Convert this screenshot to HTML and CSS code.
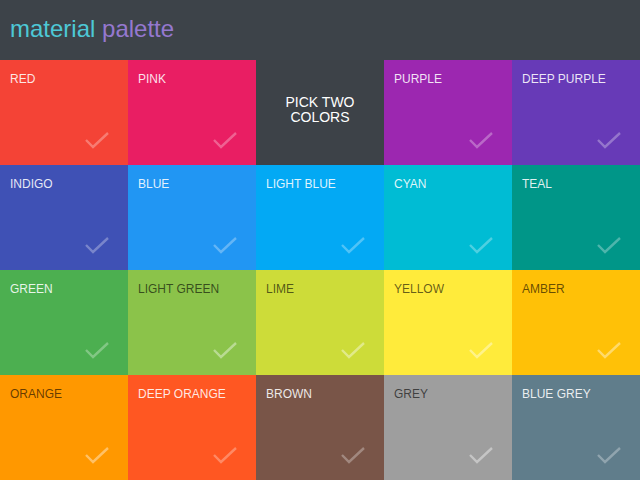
FILE: index.html
```html
<!DOCTYPE html>
<html>
<head>
<meta charset="utf-8">
<link rel="stylesheet" href="styles.css">
</head>
<body>
<header class="header">
  <h1 class="title"><span class="t-material">material</span> <span class="t-palette">palette</span></h1>
</header>
<main class="grid">
  <div class="cell red light-text"><span class="label">RED</span><svg class="check" viewBox="0 0 26 20"><path d="M2 9 L9 16 L24 2"/></svg></div>
  <div class="cell pink light-text"><span class="label">PINK</span><svg class="check" viewBox="0 0 26 20"><path d="M2 9 L9 16 L24 2"/></svg></div>
  <div class="cell pick"><span class="pick-text">PICK TWO<br>COLORS</span></div>
  <div class="cell purple light-text"><span class="label">PURPLE</span><svg class="check" viewBox="0 0 26 20"><path d="M2 9 L9 16 L24 2"/></svg></div>
  <div class="cell deep-purple light-text"><span class="label">DEEP PURPLE</span><svg class="check" viewBox="0 0 26 20"><path d="M2 9 L9 16 L24 2"/></svg></div>

  <div class="cell indigo light-text"><span class="label">INDIGO</span><svg class="check" viewBox="0 0 26 20"><path d="M2 9 L9 16 L24 2"/></svg></div>
  <div class="cell blue light-text"><span class="label">BLUE</span><svg class="check" viewBox="0 0 26 20"><path d="M2 9 L9 16 L24 2"/></svg></div>
  <div class="cell light-blue light-text"><span class="label">LIGHT BLUE</span><svg class="check" viewBox="0 0 26 20"><path d="M2 9 L9 16 L24 2"/></svg></div>
  <div class="cell cyan light-text"><span class="label">CYAN</span><svg class="check" viewBox="0 0 26 20"><path d="M2 9 L9 16 L24 2"/></svg></div>
  <div class="cell teal light-text"><span class="label">TEAL</span><svg class="check" viewBox="0 0 26 20"><path d="M2 9 L9 16 L24 2"/></svg></div>

  <div class="cell green light-text"><span class="label">GREEN</span><svg class="check" viewBox="0 0 26 20"><path d="M2 9 L9 16 L24 2"/></svg></div>
  <div class="cell light-green dark-text"><span class="label">LIGHT GREEN</span><svg class="check" viewBox="0 0 26 20"><path d="M2 9 L9 16 L24 2"/></svg></div>
  <div class="cell lime dark-text"><span class="label">LIME</span><svg class="check" viewBox="0 0 26 20"><path d="M2 9 L9 16 L24 2"/></svg></div>
  <div class="cell yellow dark-text"><span class="label">YELLOW</span><svg class="check" viewBox="0 0 26 20"><path d="M2 9 L9 16 L24 2"/></svg></div>
  <div class="cell amber dark-text"><span class="label">AMBER</span><svg class="check" viewBox="0 0 26 20"><path d="M2 9 L9 16 L24 2"/></svg></div>

  <div class="cell orange dark-text"><span class="label">ORANGE</span><svg class="check" viewBox="0 0 26 20"><path d="M2 9 L9 16 L24 2"/></svg></div>
  <div class="cell deep-orange light-text"><span class="label">DEEP ORANGE</span><svg class="check" viewBox="0 0 26 20"><path d="M2 9 L9 16 L24 2"/></svg></div>
  <div class="cell brown light-text"><span class="label">BROWN</span><svg class="check" viewBox="0 0 26 20"><path d="M2 9 L9 16 L24 2"/></svg></div>
  <div class="cell grey dark-text"><span class="label">GREY</span><svg class="check" viewBox="0 0 26 20"><path d="M2 9 L9 16 L24 2"/></svg></div>
  <div class="cell blue-grey light-text"><span class="label">BLUE GREY</span><svg class="check" viewBox="0 0 26 20"><path d="M2 9 L9 16 L24 2"/></svg></div>
</main>
</body>
</html>
```
FILE: styles.css
```css
* { box-sizing: border-box; }
html, body { margin: 0; padding: 0; }
body {
  width: 640px;
  height: 480px;
  overflow: hidden;
  font-family: "Liberation Sans", Arial, sans-serif;
  background: #3d4349;
}
.header {
  height: 60px;
  background: #3d4349;
  display: flex;
  align-items: center;
  padding-left: 10px;
}
.title {
  margin: 0;
  font-size: 24px;
  font-weight: normal;
  line-height: 1;
  padding-bottom: 2px;
  font-family: "Liberation Sans", Arial, sans-serif;
}
.t-material { color: #4dc8d6; }
.t-palette { color: #9578cf; }
.grid {
  display: grid;
  grid-template-columns: repeat(5, 128px);
  grid-template-rows: repeat(4, 105px);
}
.cell {
  display: flex;
  flex-direction: column;
  justify-content: space-between;
  padding: 12px 10px 14px 10px;
}
.label {
  font-size: 12px;
  line-height: 14px;
}
.light-text .label { color: rgba(255,255,255,0.88); }
.dark-text .label { color: rgba(0,0,0,0.62); }
.check {
  align-self: flex-end;
  width: 26px;
  height: 20px;
  margin-right: 8px;
  fill: none;
  stroke: rgba(255,255,255,0.3);
  stroke-width: 2.4;
}
.dark-text .check { stroke: rgba(255,255,255,0.4); }
.pick {
  background: #3d4248;
  justify-content: center;
  align-items: center;
  padding: 0 0 5px 0;
}
.pick-text {
  color: #ffffff;
  font-size: 14px;
  line-height: 15px;
  text-align: center;
}
.red { background: #f44336; }
.pink { background: #e91e63; }
.purple { background: #9c27b0; }
.deep-purple { background: #673ab7; }
.indigo { background: #3f51b5; }
.blue { background: #2196f3; }
.light-blue { background: #03a9f4; }
.cyan { background: #00bcd4; }
.teal { background: #009688; }
.green { background: #4caf50; }
.light-green { background: #8bc34a; }
.lime { background: #cddc39; }
.yellow { background: #ffeb3b; }
.amber { background: #ffc107; }
.orange { background: #ff9800; }
.deep-orange { background: #ff5722; }
.brown { background: #795548; }
.grey { background: #9e9e9e; }
.blue-grey { background: #607d8b; }
```
